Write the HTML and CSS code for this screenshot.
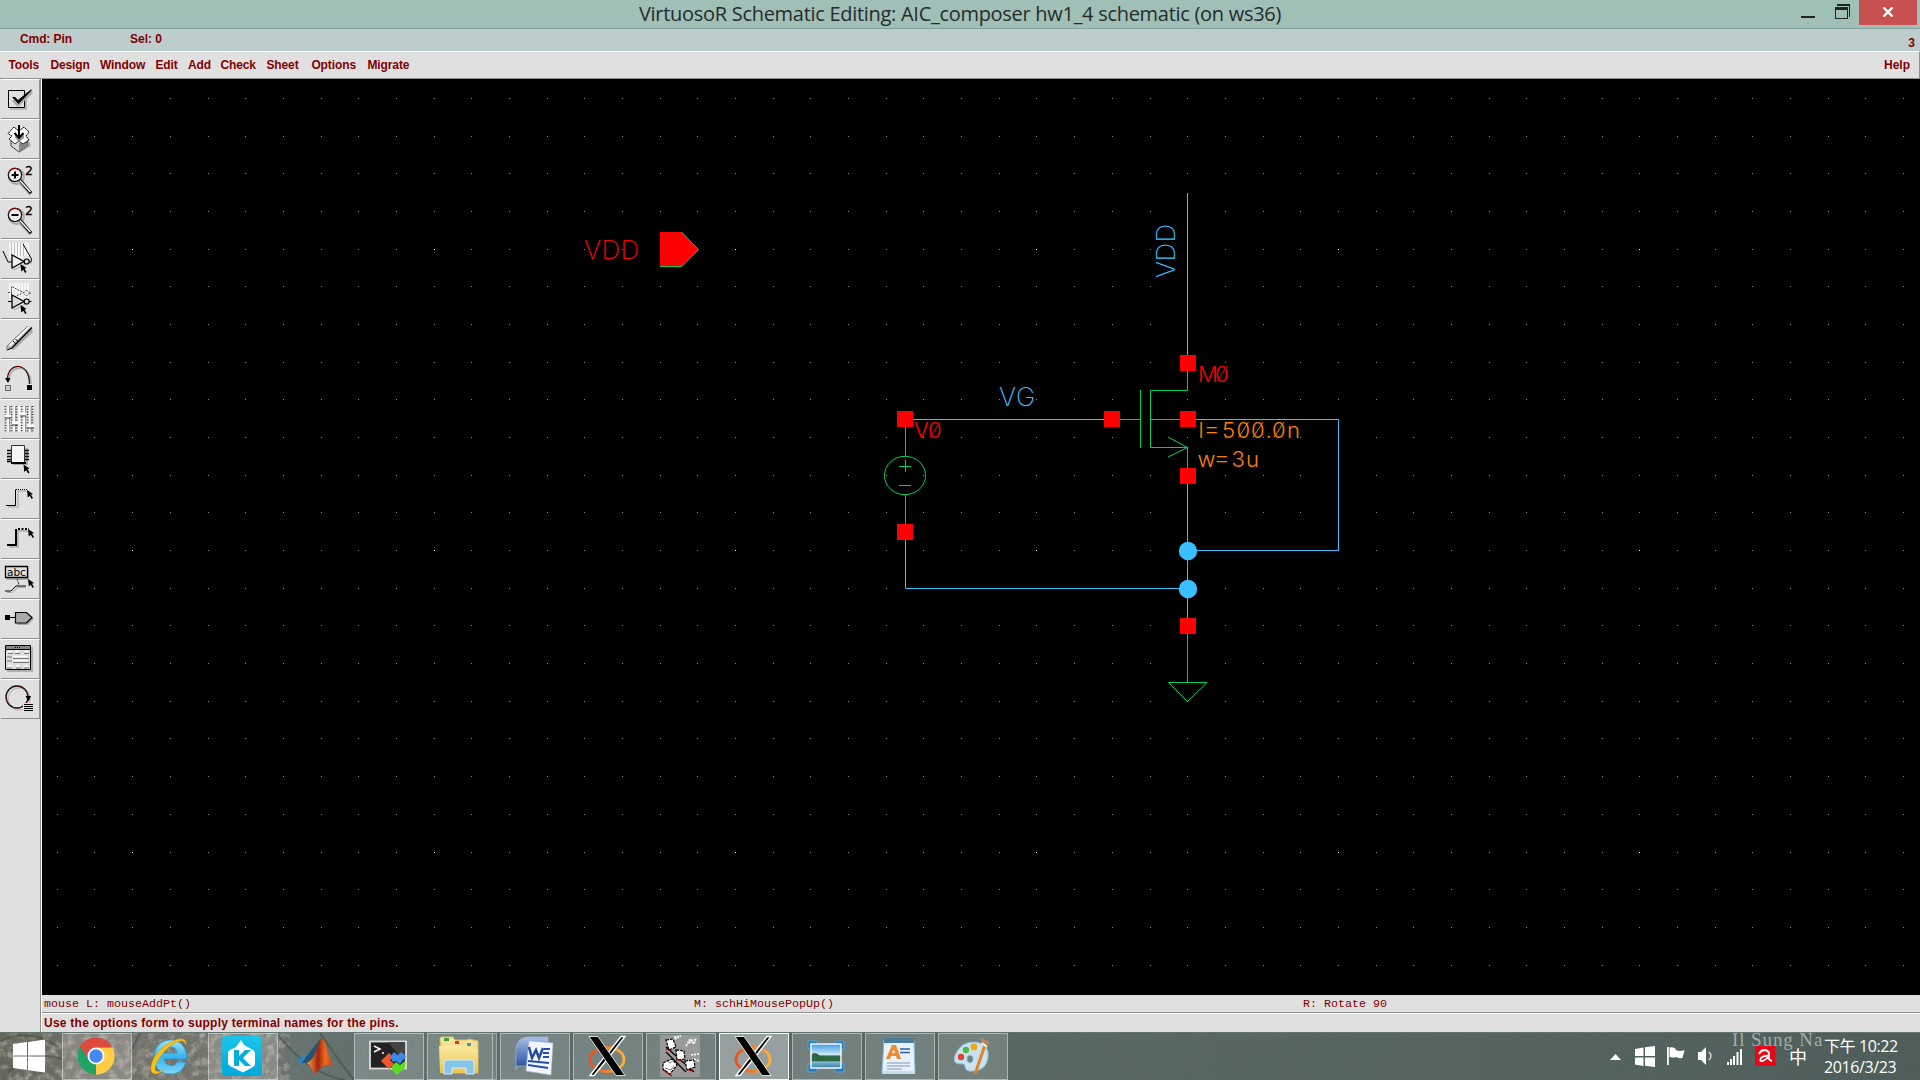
FILE: index.html
```html
<!DOCTYPE html>
<html lang="en">
<head>
<meta charset="utf-8">
<title>VirtuosoR Schematic Editing: AIC_composer hw1_4 schematic (on ws36)</title>
<link rel="stylesheet" href="styles.css">
</head>
<body>
<svg class="defs" width="0" height="0">
  <defs>
    <path id="cursor" d="M0 0L6 4L4 4.8L6 8L4.6 9L2.8 5.8L.8 7.5z"/>
    <linearGradient id="ieg" x1="0" y1="0" x2="0" y2="1"><stop offset="0" stop-color="#9be4fb"/><stop offset=".5" stop-color="#35b4ec"/><stop offset="1" stop-color="#7bd8fa"/></linearGradient>
    <linearGradient id="kg" x1="0" y1="0" x2="0" y2="1"><stop offset="0" stop-color="#1cc3ea"/><stop offset="1" stop-color="#02a9da"/></linearGradient>
    <linearGradient id="mlg" x1="0" y1="0" x2="1" y2="0"><stop offset="0" stop-color="#f9a13a"/><stop offset=".4" stop-color="#a02312"/><stop offset=".65" stop-color="#ee6a1c"/><stop offset="1" stop-color="#c63a12"/></linearGradient>
    <linearGradient id="fog" x1="0" y1="0" x2="0" y2="1"><stop offset="0" stop-color="#fbe9a0"/><stop offset="1" stop-color="#e9c552"/></linearGradient>
    <linearGradient id="wdg" x1="0" y1="0" x2="0" y2="1"><stop offset="0" stop-color="#a9bfe6"/><stop offset="1" stop-color="#1b4597"/></linearGradient>
    <linearGradient id="xog" x1="0" y1="0" x2="1" y2="0"><stop offset="0" stop-color="#ef4d23"/><stop offset="1" stop-color="#fbb13c"/></linearGradient>
    <linearGradient id="phg" x1="0" y1="0" x2="0" y2="1"><stop offset="0" stop-color="#3b9de8"/><stop offset=".45" stop-color="#cfeaf8"/><stop offset=".5" stop-color="#2f6a45"/><stop offset=".68" stop-color="#35704f"/><stop offset=".75" stop-color="#7db8d0"/><stop offset="1" stop-color="#3a7ea8"/></linearGradient>
    <g id="xicon">
      <ellipse cx="19" cy="23.500" rx="17" ry="12" fill="none" stroke="url(#xog)" stroke-width="2.800"/>
      <path d="M33 0.500H37L22 20L19.500 17.500zM2 39.500L17 20L19.500 23L6 39.500z" fill="#000" stroke="#fff" stroke-width="1.400"/>
      <path d="M1 .500H10L37 39.500H28z" fill="#000" stroke="#fff" stroke-width=".8"/>
    </g>
    <filter id="grain" x="0" y="0" width="100%" height="100%"><feTurbulence type="fractalNoise" baseFrequency=".35" numOctaves="3" seed="4"/><feColorMatrix values="0 0 0 0 .1  0 0 0 0 .13  0 0 0 0 .12  1.1 0 0 0 -.45"/></filter>
    <filter id="rough" x="0" y="0" width="100%" height="100%"><feTurbulence type="fractalNoise" baseFrequency=".12" numOctaves="4" seed="9"/><feColorMatrix values="0 0 0 0 .62  0 0 0 0 .56  0 0 0 0 .5  1.6 0 0 0 -.7"/></filter>
  </defs>
</svg>
<div class="screen">
  <header class="titlebar">
    <h1 class="title">VirtuosoR Schematic Editing: AIC_composer hw1_4 schematic (on ws36)</h1>
    <div class="controls">
      <svg width="60" height="26" viewBox="1799 0 60 26" shape-rendering="crispEdges"><path d="M1801 16h14v2h-14z" fill="#222"/><path d="M1837 4h13v13h-1v-11h-12z" fill="#222"/><path fill-rule="evenodd" d="M1835 7h13v12h-13zM1836 10v8h11v-8z" fill="#222"/></svg>
      <div class="close"><svg width="12" height="10" viewBox="0 0 12 10"><path d="M1.5 .5L10.5 9.5M10.5 .5L1.5 9.5" stroke="#fff" stroke-width="2.4"/></svg></div>
    </div>
  </header>
  <div class="status"><span class="cmd">Cmd: Pin</span><span class="sel">Sel: 0</span><span class="num">3</span></div>
  <nav class="menu"><span>Tools</span><span>Design</span><span>Window</span><span>Edit</span><span>Add</span><span>Check</span><span>Sheet</span><span>Options</span><span>Migrate</span><span class="help">Help</span></nav>
  <main class="work">
    <aside class="tools">
      <div class="tool"><svg viewBox="1 1 38 38"><path d="M10 13h17v18H10z" fill="#b8b8b8"/><path d="M8.5 11.5h16v17h-16z" fill="#e0e0e0" stroke="#000"/><path d="M13 21l5 5 14-13" fill="none" stroke="#aaa" stroke-width="3"/><path d="M12 18l3 0 3 3L31 10.5 32 11 18.500 25z" fill="#000"/></svg></div>
      <div class="tool"><svg viewBox="1 1 38 38"><path d="M19 34L31 27 28 19 19 24z" fill="#aaa"/><path d="M11 22v5l8 6 8-6v-5z" fill="#d8d8d8" stroke="#000" stroke-dasharray="1.5 .6"/><path d="M19 24v9l8-6v-5z" fill="#888"/><path d="M8 14.500L14 8l5 4 5-4 5 5-3 4 3 4-6 4-4-3-4 3-6-5 3-3z" fill="#fff" stroke="#000" stroke-dasharray="2 .5"/><path d="M15 15l4 5 5-5v4l-5 4-4-4z" fill="#999"/><path d="M19 6v13M14.500 14l4.500 5 4.500-5" fill="none" stroke="#000" stroke-width="2"/></svg></div>
      <div class="tool"><svg viewBox="1 1 38 38"><path d="M21 24L31 35" stroke="#999" stroke-width="4"/><circle cx="16.500" cy="17.500" r="7.500" fill="none" stroke="#aaa" stroke-width="2"/><circle cx="15" cy="16" r="6.700" fill="#ececec" stroke="#111" stroke-width="1.300"/><path d="M11.500 16h7M15 12.500v7" stroke="#000" stroke-width="2"/><path d="M20 21L31 34" stroke="#000" stroke-width="3"/><path d="M20 21.500L30.500 33" stroke="#fff" stroke-width="1.500"/><path d="M9 13a7 7 0 0 1 8-3.500" fill="none" stroke="#900"/><text class="pow" x="25" y="15.500">2</text></svg></div>
      <div class="tool"><svg viewBox="1 1 38 38"><path d="M21 24L31 35" stroke="#999" stroke-width="4"/><circle cx="16.500" cy="17.500" r="7.500" fill="none" stroke="#aaa" stroke-width="2"/><circle cx="15" cy="16" r="6.700" fill="#ececec" stroke="#111" stroke-width="1.300"/><path d="M11.500 16h7" stroke="#000" stroke-width="2"/><path d="M20 21L31 34" stroke="#000" stroke-width="3"/><path d="M20 21.500L30.500 33" stroke="#fff" stroke-width="1.500"/><path d="M9 13a7 7 0 0 1 8-3.500" fill="none" stroke="#900"/><text class="pow" x="25" y="15.500">2</text></svg></div>
      <div class="tool"><svg viewBox="1 1 38 38"><path d="M10 4v15M13 4v15M16 4v16M19 4v17M22 4v16M25 4v13M28 4v13" stroke="#fff" stroke-width="1.500"/><path d="M11.500 4v13M14.500 4v13M17.500 4v13M20.500 4v13M23.500 4v13" stroke="#bbb"/><path d="M14 18v13l12-6zM26 24h6" fill="none" stroke="#aaa"/><path d="M3 12L8 23H12M23 5L31.500 20 31 23H29.500" fill="none" stroke="#000"/><path d="M12 16v13l12-6.500z" fill="#eee" stroke="#000" stroke-width="1.300"/><circle cx="26.700" cy="22.500" r="2.500" fill="#ddd" stroke="#000" stroke-width="1.200"/><use href="#cursor" x="20.500" y="25"/></svg></div>
      <div class="tool"><svg viewBox="1 1 38 38"><path d="M10 4v15M13 4v15M16 4v16M19 4v17M22 4v16M25 4v15M28 4v15" stroke="#fff" stroke-width="1.500"/><path d="M8 13.500h4M11.500 7.500v12l12-6zM29 14h2" fill="none" stroke="#555" stroke-dasharray="2 1"/><circle cx="26.500" cy="14" r="2.500" fill="none" stroke="#555" stroke-dasharray="1.500 1"/><path d="M14 18v13l12-6z" fill="none" stroke="#aaa"/><path d="M8 22.500h4M29 22.500h2.500" stroke="#000"/><path d="M12 16v13l12-6.500z" fill="#ddd" stroke="#000" stroke-width="1.300"/><circle cx="26.700" cy="22.500" r="2.500" fill="#ddd" stroke="#000" stroke-width="1.200"/><use href="#cursor" x="20.500" y="26"/></svg></div>
      <div class="tool"><svg viewBox="1 1 38 38"><path d="M12 30L32 11" stroke="#aaa" stroke-width="4"/><path d="M7 31l1-5L28 7l4 1L12 28z" fill="#bbb"/><path d="M9.500 26.500L29 7.500" stroke="#fff" stroke-width="2"/><path d="M7 31l5-2L32 8.500" fill="none" stroke="#000" stroke-width="1.300"/><path d="M7 31V27L28 7" fill="none" stroke="#777"/><path d="M13 22l3 3M15.500 20l3 3" stroke="#000"/></svg></div>
      <div class="tool"><svg viewBox="1 1 38 38"><path d="M9 22C9 5 31 4 31 25" fill="none" stroke="#aaa" stroke-width="1.500"/><path d="M7.500 20C8 3 29.500 2 29.500 25" fill="none" stroke="#111" stroke-width="1.200"/><path d="M7.500 20C8 3 29.500 2 29.500 25" fill="none" stroke="#c00" stroke-width="1.200" stroke-dasharray="1 3"/><path d="M5 19h5.500l-2.500 5z" fill="#000"/><path d="M5.500 26.500h5v5h-5z" fill="#ccc" stroke="#000" stroke-dasharray="1 1"/><path d="M27 26h5v5h-5z" fill="#000"/></svg></div>
      <div class="tool"><svg viewBox="1 1 38 38"><path d="M5.500 7v26M11.500 7v26M16.500 7v26M21.500 7v26M27.500 7v26M32.500 7v26" stroke="#333" stroke-width="1.700" stroke-dasharray="1 1.700"/><path d="M8.500 7v26M14.500 7v26M19.500 7v26M24.500 7v26M30 7v26" stroke="#fff" stroke-width="2"/><path d="M9.700 7v26M15.700 7v26M25.700 7v26M31.200 7v26" stroke="#888"/><path d="M5 17h6M12 24h6M20 15h6M27 27h7" stroke="#fff" stroke-width="3"/><path d="M5 19h6M12 26h6M20 17h6M27 29h7" stroke="#333"/></svg></div>
      <div class="tool"><svg viewBox="1 1 38 38"><path d="M13 9h15v17H13z" fill="#aaa"/><path d="M7 11.500h4M7 14.500h4M7 17.500h4M7 20.500h4M7 22.500h4M25 11.500h4M25 14.500h4M25 17.500h4M25 20.500h4" stroke="#000" stroke-width="1.300"/><path d="M11.500 6.500h13v17h-13z" fill="#f6f6f6" stroke="#333"/><path d="M11 24h15" stroke="#000" stroke-width="2"/><use href="#cursor" x="23.500" y="25.500"/></svg></div>
      <div class="tool"><svg viewBox="1 1 38 38"><path d="M8 28h10V12H28" fill="none" stroke="#b8b8b8" stroke-width="1.500"/><path d="M6 26.500h9.500V10.500" fill="none" stroke="#000"/><path d="M16 10.500h12" stroke="#000" stroke-dasharray="1 1"/><use href="#cursor" x="27" y="11"/></svg></div>
      <div class="tool"><svg viewBox="1 1 38 38"><path d="M9 28h9V12H28" fill="none" stroke="#b8b8b8" stroke-width="2"/><path d="M7 26h9V10" fill="none" stroke="#000" stroke-width="2"/><path d="M18 10h11" stroke="#000" stroke-width="2" stroke-dasharray="2 1.500"/><use href="#cursor" x="28" y="10"/></svg></div>
      <div class="tool"><svg viewBox="1 1 38 38"><path d="M7 9h22v12H7z" fill="#b0b0b0"/><path d="M5.500 7.500h22v11h-22z" fill="#e0e0e0" stroke="#000" stroke-width="1.300"/><text class="abc" x="7" y="16.500">abc</text><path d="M18 20l-1 2 2 2-1 2" fill="none" stroke="#000" stroke-dasharray="1 .7"/><path d="M7 33.500h5l6-5h8" fill="none" stroke="#aaa"/><path d="M5 32h6l5-5h10" fill="none" stroke="#000"/><use href="#cursor" x="28" y="20"/></svg></div>
      <div class="tool"><svg viewBox="1 1 38 38"><path d="M17 15h11l6 5-6 6H17z" fill="#aaa"/><path d="M5 16h5v5H5z" fill="#000"/><path d="M10 18.500h5" stroke="#000"/><path d="M15.500 13.500h11l5.500 5-5.500 5.500h-11z" fill="#aaa" stroke="#000" stroke-width="1.200"/></svg></div>
      <div class="tool"><svg viewBox="1 1 38 38"><path d="M7 8h26v25H7z" fill="#b0b0b0"/><path d="M5.500 6.500h25v24h-25z" fill="#ddd" stroke="#000"/><path d="M6 8.500h24" stroke="#888" stroke-width="3"/><path d="M15 8.500h6" stroke="#000" stroke-dasharray="1 1"/><path d="M6 10.500h24" stroke="#000"/><path d="M8 12.500h4M15 12.500h4M24 12.500h4M13 17.500h15M13 21.500h15M8 27h4M16 27h4M24 27h4" stroke="#fff" stroke-width="1.500"/><path d="M8 14.500h5M15 14.500h5M24 14.500h5M7 18h5M13 19.500h16M7 22h5M13 23.500h16M7 29h5M16 29h5M24 29h5" stroke="#777"/></svg></div>
      <div class="tool"><svg viewBox="1 1 38 38"><circle cx="19" cy="20" r="11" fill="none" stroke="#c0c0c0" stroke-width="1.500"/><circle cx="17" cy="18" r="11" fill="none" stroke="#111" stroke-width="1.300"/><circle cx="17" cy="18" r="11" fill="none" stroke="#b00" stroke-width="1.300" stroke-dasharray="1 4"/><path d="M25.500 17h5.500l-2.500 5.500z" fill="#000"/><path d="M23 24h11v8H23z" fill="#e0e0e0"/><path d="M24 25.500h9M24 27.500h9M24 29.500h9M24 31.500h9" stroke="#000"/></svg></div>
    </aside>
    <div class="editor">
      <svg class="canvas" width="1878" height="916" viewBox="42 79 1878 916">
        <path id="minor" fill="#8a8a9c" shape-rendering="crispEdges"/>
        <path id="major" fill="#fff" shape-rendering="crispEdges"/>
        <path d="M660 232h21.500l17 17.500-17 17H660z" fill="#f00"/>
        <path d="M681.500 232l17 17.500-16.500 17H660" fill="none" stroke="#00d060"/>
        <g class="wire">
          <path d="M1187.500 193v162M913 419.500h191M905.500 540v48.500h282M1196 419.500h142.500v131h-151M1187.500 484v134"/>
        </g>
        <g class="device">
          <path d="M905.500 427v29M905.500 495v29M899 466.500h12M905.500 460v12M899 485.500h12"/>
          <ellipse cx="905" cy="475.500" rx="20.500" ry="19.200"/>
          <path d="M1187.500 371v19.500h-37v57h37v20.500M1140.500 390v58M1120 419.500h20M1150 419.500h30M1187.500 634v48"/>
          <path d="M1168.500 682.500h38.500l-19.500 19z"/><path d="M1168 437l19.500 10.500-19.500 9.500"/>
        </g>
        <path d="M897 411h16v16h-16zM1104 411h16v16h-16zM897 524h16v16h-16zM1180 355h16v16h-16zM1180 411h16v16h-16zM1180 468h16v16h-16zM1180 618h16v16h-16z" fill="#f00"/>
        <circle cx="1188" cy="551" r="9.200" fill="#39bfff"/><circle cx="1188" cy="589" r="9.200" fill="#39bfff"/>
        <g class="label big">
          <text class="red" x="584 601.500 620.500" y="259">VDD</text>
          <text class="blue" x="999 1016" y="405.500">VG</text>
          <text class="blue" transform="translate(1175 278) rotate(-90)" x="0 16.500 35.500" y="0">VDD</text>
        </g>
        <g class="label">
          <text class="red" x="914 928" y="438">V0</text>
          <text class="red" x="1198 1215" y="382">M0</text>
          <text class="orange" x="1198.500 1203 1222 1236.500 1251 1265.500 1272 1287" y="438">l<tspan class="eq">=</tspan>500.0n</text>
          <text class="orange" x="1197.500 1213 1231.500 1246" y="467">w<tspan class="eq">=</tspan>3u</text>
        </g>
        <!-- Slashes through the zeros -->
        <path d="M930 437.500l10-15.500M1217 381.500l10-15.500" stroke="#f00"/>
        <path d="M1238.500 437.500l10-15.500M1253 437.500l10-15.500M1274 437.500l10-15.500" stroke="#ff8000"/>
      </svg>
      <div class="mouse"><span>mouse L: mouseAddPt()</span><span>M: schHiMousePopUp()</span><span>R: Rotate 90</span></div>
      <div class="prompt">Use the options form to supply terminal names for the pins.</div>
    </div>
  </main>
  <footer class="taskbar">
    <svg class="texture" width="1920" height="47"><rect width="290" height="47" filter="url(#rough)"/><rect width="1920" height="47" filter="url(#grain)"/><path d="M0 8q30-14 58 6M8 40q24-24 54-14M278 2q30 38 66 45M320 0q10 16 34 47M130 20l10-20" fill="none" stroke="#3f4a40" stroke-width="2" opacity=".55"/></svg>
    <div class="task start"><svg width="34" height="34" viewBox="0 0 34 34" fill="#fff"><path d="M1 5L15 3v13.500H1zM16 2.900L33 .5v16H16zM1 17.500h14V31L1 29zM16 17.500h17v16L16 31.200z"/></svg></div>
    <div class="task open"><svg width="38" height="38" viewBox="-19 -19 38 38"><path d="M0 0L-15.900-9.200A18.400 18.400 0 0 1 15.900-9.200H0z" fill="#dd4b3e"/><path d="M0 0L15.900-9.200A18.400 18.400 0 0 1 0 18.400z" fill="#ffcd46"/><path d="M0 0L0 18.400A18.400 18.400 0 0 1-15.900-9.200z" fill="#1da462"/><path d="M0-8.500H16.500A18.400 18.400 0 0 1 0 18.400L7 4z" fill="#ffcd46"/><path d="M-15.900-9.200A18.400 18.400 0 0 1 16.300-8.500H0L-7 4z" fill="#dd4b3e"/><circle r="8.500" fill="#fff"/><circle r="6.700" fill="#4688f1"/></svg></div>
    <div class="task"><svg width="40" height="40" viewBox="0 0 40 40"><path fill-rule="evenodd" d="M22 4C32 4 38 12 38 23H15c0 7 11 9 13 3h9C34 35 29 38 21 38 11 38 5 31 5 21S12 4 22 4zM15 17h13c0-8-13-8-13 0z" fill="url(#ieg)" stroke="#218dc5" stroke-width=".7"/><path d="M37 9C39-3 17 4 6 20 1 29 0 37 6 38c3 0 6-2 9-4-5 2-9 2-9-1 0-4 2-8 5-12C19 9 35-1 37 9z" fill="#f6c11b" stroke="#d89506" stroke-width=".5"/></svg></div>
    <div class="task open"><svg width="40" height="40" viewBox="0 0 40 40"><rect width="40" height="40" rx="4" fill="url(#kg)"/><path d="M19 4l3 5 9 5q2 1 2 4v10q0 2-2 3L21 36.500 8 30q-2-1-2-3V17q0-2 2-3l6-3z" fill="#fff"/><path d="M12 14h5v6l6-6h6l-8 8 8 8h-6l-6-6v6h-5z" fill="#06aedd"/></svg></div>
    <div class="task"><svg width="40" height="40" viewBox="0 0 40 40"><path d="M1 23L14 17 27 2 17 31 12 27 6 29z" fill="#3a7fae"/><path d="M7 27l7-10L27 1 20 22 12 27z" fill="#245274"/><path d="M12 27q7-3 11-18 3-7 4-7 3 1 6 15 3 10 7 15-6-6-11-2-6 4-10 9-2-8-7-12z" fill="url(#mlg)"/></svg></div>
    <div class="task open"><svg width="40" height="40" viewBox="0 0 40 40"><rect x="2" y="5.500" width="36" height="27" fill="#222" stroke="#ddd" stroke-width="1.800"/><path d="M20 6h17v20z" fill="#444"/><path d="M6 10l6 3-6 3M14 17h2" fill="none" stroke="#fff" stroke-width="1.500"/><path d="M13 25l8-8 4 4-3 3 4 4-5 5z" fill="#f0572a"/><path d="M26 16l4 3 3-3 5 4-6 8-4-3-3 1-3-5z" fill="#3989e6"/><path d="M24 30l4-4 4 3 5-4v7l-8 7-5-5z" fill="#5ddb25"/></svg></div>
    <div class="task open stack"><svg width="42" height="40" viewBox="0 0 42 40"><path d="M2 3q0-2 2-2h11l2 3h12l2-1 9 2v32H4z" fill="url(#fog)" stroke="#d9b954"/><path d="M6 2h5v3H6z" fill="#3a9e48"/><path d="M17 5h4v3h-4z" fill="#d63a32"/><path d="M29 7h4v3h-4z" fill="#3c98c8"/><path d="M1 10h28l2 3h9v24H2z" fill="url(#fog)"/><path d="M6 38V27q0-3 3-3h24q3 0 3 3v11h-8v-6H14v6z" fill="#86c4e8" stroke="#d5effa"/></svg></div>
    <div class="task open"><svg width="40" height="40" viewBox="0 0 40 40"><path d="M2 34V14Q2 2 14 1H34V30H2z" fill="url(#wdg)" stroke="#9cb4df" stroke-width=".7"/><path d="M15 5l24 2-2 32-25-4z" fill="#f2f6fc" stroke="#a9bbda" stroke-width=".6"/><path d="M15 11l3 11 4-8 3 8 4-10" fill="none" stroke="#244b9c" stroke-width="2.500"/><path d="M30 13h6M29 17h6M29 21h6M14 25l21 2M14 29l20 3" stroke="#2450a4" stroke-width="2"/></svg></div>
    <div class="task open"><svg width="38" height="42" viewBox="0 -1 38 42"><use href="#xicon"/></svg></div>
    <div class="task open"><svg width="40" height="42" viewBox="0 0 40 42"><path d="M0 0h40v42H0z" fill="#999"/><path d="M6 12L34 37M6 17L26 37" stroke="#000" stroke-width="1.200"/><path d="M6 5l7-1 3 8-7 3zM16 15l8 1 1 8-8 1zM25 26l9-1 1 7-8 3zM3 28l9-4 5 6-7 9-7-5z" fill="#fff" stroke="#000" stroke-width="1.200" stroke-dasharray="3 1"/><path d="M6 14l5 2M16 24l6 2M26 34l6 2M3 35l9 6" stroke="#a00" stroke-width="1.200"/><path d="M5 25l5 3 4-3M5 33l6 2 3-4" fill="none" stroke="#777"/><path d="M14 2l7-1M15 4l4-2M26 11l4-7 4 5 2-6M29 8l5-4M31 20l8-1M34 24l5 2" stroke="#fff" stroke-width="1.700" fill="none" stroke-dasharray="2 1"/></svg></div>
    <div class="task open active"><svg width="38" height="42" viewBox="0 -1 38 42"><use href="#xicon"/></svg></div>
    <div class="task open"><svg width="40" height="38" viewBox="0 0 40 38"><path d="M2 4h9v8H2zM29 4h9v8h-9zM2 27h9v8H2zM29 27h9v8h-9z" fill="#2877b7" stroke="#58a5d9"/><rect x="5" y="7" width="30" height="24" fill="url(#phg)" stroke="#f2f7fa" stroke-width="1.500"/><path d="M6 17q4-3 9 3l19 1v3H6z" fill="#2c6742"/></svg></div>
    <div class="task open"><svg width="38" height="40" viewBox="0 0 38 40"><path d="M4 4h30l1 32H2z" fill="#e5f2fb" stroke="#8eb7cf"/><path d="M4 2h30v5H4z" fill="#4e7c9d"/><path d="M2 35h33v3H2z" fill="#c3ddeb"/><path fill-rule="evenodd" d="M6 23l6-14h4l5 14h-4l-1-3h-5l-1 3zM12 17h3l-1.500-4z" fill="#f28a2b"/><path d="M20 13h10M20 16.500h10" stroke="#315ba0" stroke-width="1.500"/><path d="M7 27h23M7 30h23M7 33h15" stroke="#8396a8"/></svg></div>
    <div class="task open"><svg width="42" height="40" viewBox="0 0 42 40"><path fill-rule="evenodd" d="M4 19Q10 5 25 6q14 2 12 16-2 12-14 13-9 1-9-4 0-4-5-3-8 0-5-9zM16 23c0 5 6 5 6 0s-6-5-6 0z" fill="#c7e3f2" stroke="#8bb8d2"/><circle cx="10" cy="21" r="3.200" fill="#dd4237"/><circle cx="15" cy="14" r="3.200" fill="#4fb841"/><circle cx="23" cy="11" r="3.400" fill="#f6a31c"/><path d="M34 9L24 38" stroke="#e58228" stroke-width="3"/><path d="M30 1l9 6-4 3-5-3z" fill="#b88858"/><path d="M31 7l5 4" stroke="#eee" stroke-width="2"/></svg></div>
    <div class="tray">
      <svg width="200" height="40" viewBox="1608 1040 200 40"><path d="M1610 1061l5.500-6 5.500 6z" fill="#fff"/><path d="M1635 1050l8.500-1.500v8.500h-8.500zM1645 1048.300l10-1.300v10h-10zM1635 1058.500h8.500v8.500l-8.500-1.500zM1645 1058.500h10v9.500l-10-1.300z" fill="#fff"/><path d="M1667 1048h1.800v18h-1.800zM1669.500 1048.500q5-1 7 3 4 1 8-.5l-2 8q-4 1-6-1-3 1-7 0z" fill="#fff"/><path d="M1698 1053h3l5-5v18l-5-5h-3z" fill="#fff"/><path d="M1709 1053q4 4 0 8" fill="none" stroke="#ddd" stroke-width="1.300"/><path d="M1727 1063h2v3h-2zM1730 1060h2v6h-2zM1733 1057h2v9h-2zM1736.500 1053h2v13h-2zM1740 1050h2v16h-2z" fill="#fff"/><rect x="1755" y="1047" width="20.500" height="20" rx="1" fill="#e30a17"/><path d="M1759 1055q2-4 6-4 5 1 4 6-1 4 3 5M1769 1057q-5-1-8 2-2 4 2 3 4-2 6-5" fill="none" stroke="#fff" stroke-width="1.800"/></svg>
      <span class="ime">中</span>
      <div class="clock"><span class="time">下午 10:22</span><span class="date">2016/3/23</span></div>
      <span class="wall">Il Sung Na</span>
    </div>
  </footer>
</div>
<script src="grid.js"></script>
</body>
</html>
```
FILE: styles.css
```css
* { box-sizing: border-box; }
body { margin: 0; background: #000; overflow: hidden; }
.defs { position: absolute; }
.screen { width: 1920px; height: 1080px; display: flex; flex-direction: column; font: bold 12px/16px "Liberation Sans", Arial, sans-serif; color: #800000; }
svg { display: block; flex: none; }

.titlebar { height: 29px; display: grid; grid-template-columns: 1fr auto 1fr; background: #9fbfb7; border-bottom: 1px solid #84a29b; }
.title { grid-column: 2; margin: 0; font: 400 20px/28px "Open Sans", "Noto Sans", sans-serif; letter-spacing: -0.290px; color: #262c2b; white-space: nowrap; }
.controls { display: flex; justify-content: flex-end; padding-right: 3px; }
.close { width: 58px; height: 25px; background: #c75050; display: flex; align-items: center; justify-content: center; padding-bottom: 2px; }

.status { height: 22px; background: #bdcccd; display: flex; padding: 2px 5px 0 20px; }
.cmd { width: 110px; letter-spacing: -.1px; }
.num { margin-left: auto; padding-top: 4px; }
.menu { height: 28px; background: #e0e0e0; border-top: 1px solid #fff; border-bottom: 1px solid #909090; border-right: 1px solid #909090; display: grid; grid-template-columns: 42px 49.500px 55.500px 32.500px 32.500px 46px 45px 56px 1fr auto; padding: 5px 9px 0 8.400px; letter-spacing: -.100px; }
.help { letter-spacing: 0; }

.work { height: 953px; display: flex; background: #e0e0e0; }
.tools { width: 42px; padding: 0 1px; border-right: 1px solid #fff; display: flex; flex-direction: column; box-shadow: inset -1px 0 #909090; }
.tool { width: 39px; height: 40px; flex: none; border-top: 1px solid #fff; border-right: 1px solid #909090; border-bottom: 1px solid #909090; }
.tool svg { width: 38px; height: 38px; }
.pow { font: 12.500px "DejaVu Sans", sans-serif; fill: #000; stroke: #000; stroke-width: .3px; }
.abc { font: 10.500px "DejaVu Sans", sans-serif; fill: #000; }

.editor { flex: 1; display: flex; flex-direction: column; }
.canvas { background: #000; }
.wire { fill: none; stroke: #39bfff; }
.device { fill: none; stroke: #00d060; }
.label { font: 300 22px Inter, sans-serif; }
.big { font-size: 26px; font-weight: 200; }
.eq { font-size: 27px; font-weight: 200; }
.red { fill: #f00; }
.blue { fill: #39bfff; }
.orange { fill: #ff8000; }

.mouse { height: 18px; border-bottom: 1px solid #909090; display: grid; grid-template-columns: 650px 609px 1fr; padding: 1px 0 0 2px; font: 11.670px/17px "Liberation Mono", monospace; }
.prompt { height: 19px; border-top: 1px solid #fff; padding-left: 2px; line-height: 18px; letter-spacing: .250px; }

.taskbar { height: 48px; position: relative; display: flex; gap: 3px; border-top: 1px solid #63756f; background: linear-gradient(90deg, #64675a 0, #77756e 130px, #75756f 250px, #697572 300px, #60716f 400px, #566865 700px, #566663 1400px, #4d5d59 1920px); }
.texture { position: absolute; left: 0; top: 0; }
.task { position: relative; width: 70px; height: 47px; flex: none; display: flex; align-items: center; justify-content: center; padding: 0 2px 1px 0; }
.start { width: 59px; }
.open { background: rgba(255, 255, 255, .17); border: 1px solid rgba(255, 255, 255, .42); }
.active { background: rgba(255, 255, 255, .38); border-color: #f4f7f6; }
.stack { width: 66px; margin-right: 4px; box-shadow: 4px 0 0 -1px #75837f, 4px 0 #9aa6a3; }

.tray { position: relative; margin-left: auto; display: flex; color: #fff; font: 400 16px/24px "Open Sans", "Noto Sans CJK TC", sans-serif; padding-top: 6px; }
.ime { margin: 8px 0 0 -19px; width: 35px; height: 18px; font: 18px/18px "Noto Sans CJK TC", sans-serif; }
.clock { width: 96px; display: flex; flex-direction: column; margin-top: -3px; line-height: 21px; letter-spacing: -.4px; white-space: nowrap; }
.wall { position: absolute; left: 124px; top: -2px; font: 19px/17px "Liberation Serif", serif; letter-spacing: .9px; color: #a0aeaa; white-space: nowrap; }
```
FILE: grid.js
```js
// Snap grid: every eighth dot is a major one.
const step = 37.68;
let minor = "", major = "";
for (let r = 0; r < 24; r++) {
  for (let c = 0; c < 50; c++) {
    const dot = `M${Math.floor(57.3 + c * step)} ${Math.floor(98.4 + r * step)}h1v1h-1z`;
    if (c % 8 === 2 && r % 8 === 4) major += dot;
    else minor += dot;
  }
}
document.getElementById("minor").setAttribute("d", minor);
document.getElementById("major").setAttribute("d", major);
```
